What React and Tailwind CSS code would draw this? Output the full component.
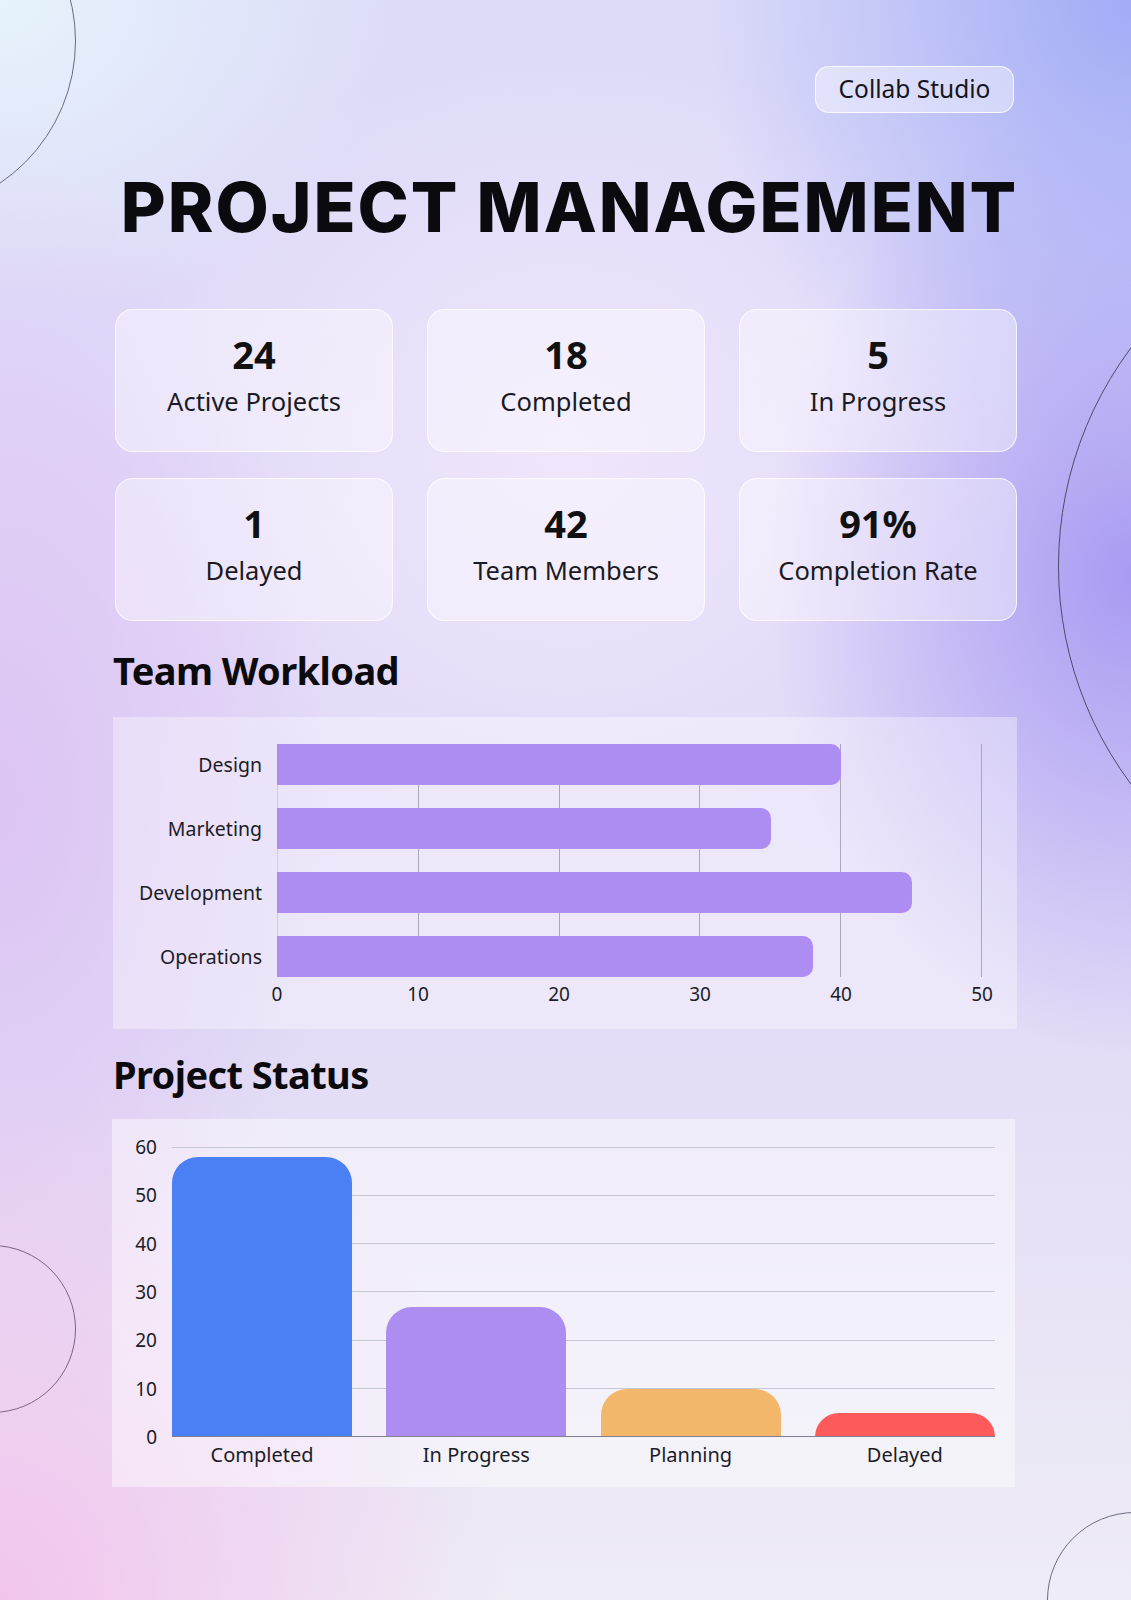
import React from 'react';

const stats = [
  { value: '24', label: 'Active Projects' },
  { value: '18', label: 'Completed' },
  { value: '5', label: 'In Progress' },
  { value: '1', label: 'Delayed' },
  { value: '42', label: 'Team Members' },
  { value: '91%', label: 'Completion Rate' },
];

const workload = [
  { team: 'Design', value: 40 },
  { team: 'Marketing', value: 35 },
  { team: 'Development', value: 45 },
  { team: 'Operations', value: 38 },
];

const status = [
  { name: 'Completed', value: 58, color: 'bg-[#4b7ff4]' },
  { name: 'In Progress', value: 27, color: 'bg-[#ae8df3]' },
  { name: 'Planning', value: 10, color: 'bg-[#f2b76a]' },
  { name: 'Delayed', value: 5, color: 'bg-[#fd5b5b]' },
];

const StatCard = ({ value, label }) => (
  <div className="h-[143px] flex flex-col items-center pt-[25px] rounded-[18px] border-[1.5px] border-white/75 bg-white/40">
    <div className="text-[38px] leading-[38px] font-bold text-[#111]">{value}</div>
    <div className="mt-[12px] text-[25.5px] leading-[32px] text-[#1a1a22]">{label}</div>
  </div>
);

const WorkloadChart = () => (
  <div className="w-[904px] h-[312px] bg-white/35 pt-[27px] flex">
    <div className="w-[149px] flex flex-col gap-[23px]">
      {workload.map((row) => (
        <div key={row.team} className="h-[41px] flex items-center justify-end text-[19.5px] text-[#1c1c26]">
          {row.team}
        </div>
      ))}
    </div>
    <div className="ml-[15px] w-[705px]">
      <div className="relative">
        <div className="absolute inset-0 flex justify-between">
          {[0, 1, 2, 3, 4, 5].map((i) => (
            <div key={i} className={`w-px h-full ${i === 0 ? 'bg-[#cfcfe0]' : 'bg-[#a9a9bb]'}`} />
          ))}
        </div>
        <div className="relative flex flex-col gap-[23px]">
          {workload.map((row) => (
            <div
              key={row.team}
              className="h-[41px] bg-[#ae8df3] rounded-r-[10px]"
              style={{ width: `${(row.value / 50) * 100}%` }}
            />
          ))}
        </div>
      </div>
      <div className="mt-[5px] -mx-[20px] flex justify-between">
        {[0, 10, 20, 30, 40, 50].map((t) => (
          <div key={t} className="w-[40px] text-center text-[19px] leading-[24px] text-[#1c1c26]">
            {t}
          </div>
        ))}
      </div>
    </div>
  </div>
);

const StatusChart = () => (
  <div className="-ml-[1px] w-[903px] h-[368px] bg-white/45 pt-[16px] flex">
    <div className="w-[45px] h-[314px] flex flex-col justify-between items-end text-[19px] leading-[24px] text-[#1c1c26]">
      {[60, 50, 40, 30, 20, 10, 0].map((t) => (
        <div key={t}>{t}</div>
      ))}
    </div>
    <div className="ml-[15px] mt-[12px] w-[823px]">
      <div className="relative h-[290px]">
        <div className="absolute inset-0 flex flex-col justify-between">
          {[60, 50, 40, 30, 20, 10].map((t) => (
            <div key={t} className="h-px w-full bg-[#c6c7d4]" />
          ))}
          <div className="h-px w-full" />
        </div>
        <div className="relative h-full flex items-end gap-[34.3px]">
          {status.map((bar) => (
            <div
              key={bar.name}
              className={`w-[180px] rounded-t-[26px] ${bar.color}`}
              style={{ height: `${(bar.value / 60) * 100}%` }}
            />
          ))}
        </div>
        <div className="absolute left-0 right-0 bottom-0 h-px bg-[#80808e]" />
      </div>
      <div className="mt-[6px] flex gap-[34.3px]">
        {status.map((bar) => (
          <div key={bar.name} className="w-[180px] text-center text-[20px] leading-[24px] text-[#1c1c26]">
            {bar.name}
          </div>
        ))}
      </div>
    </div>
  </div>
);

export default function App() {
  return (
    <div className="relative w-[1131px] h-[1600px] overflow-hidden font-['Noto_Sans',sans-serif] text-[#111] bg-[radial-gradient(ellipse_38%_30%_at_100%_0%,#a2abf6_0%,rgba(162,171,246,0)_100%),radial-gradient(ellipse_32%_30%_at_100%_36%,#a89bf2_0%,rgba(168,155,242,0)_100%),radial-gradient(ellipse_45%_35%_at_0%_100%,#f1c4ee_0%,rgba(241,196,238,0)_100%),radial-gradient(ellipse_30%_40%_at_0%_50%,#dcc4f3_0%,rgba(220,196,243,0)_100%),radial-gradient(ellipse_35%_20%_at_0%_0%,#e6f3fb_0%,rgba(230,243,251,0)_100%),radial-gradient(ellipse_40%_25%_at_50%_28%,#efe6fb_0%,rgba(239,230,251,0)_100%),linear-gradient(180deg,#dcdcf8_0%,#e2d8f8_35%,#e2dcf6_65%,#eeecf5_100%)]">
      <div className="absolute left-[-268px] top-[-131px] w-[344px] h-[344px] rounded-full border-[1.5px] border-[#6a6a7e]" />
      <div className="absolute left-[1058px] top-[201px] w-[730px] h-[730px] rounded-full border-[1.5px] border-[#4a4c68]" />
      <div className="absolute left-[-92px] top-[1245px] w-[168px] h-[168px] rounded-full border-[1.5px] border-[#7a6484]" />
      <div className="absolute left-[1047px] top-[1512px] w-[176px] h-[176px] rounded-full border-[1.5px] border-[#6e6e80]" />

      <div className="relative">
        <div className="pt-[66px] pr-[117px] flex justify-end">
          <div className="w-[199px] h-[47px] flex items-center justify-center rounded-[14px] border-[1.5px] border-white/80 bg-white/40 text-[24.5px] text-[#15151c]">
            Collab Studio
          </div>
        </div>

        <h1 className="mt-[60px] pl-[8px] text-center whitespace-nowrap font-['Inter',sans-serif] font-extrabold text-[69px] leading-[69px] tracking-[2px] text-[#0b0b0f]">
          PROJECT MANAGEMENT
        </h1>

        <div className="ml-[113px] w-[904px]">
          <div className="mt-[67px] ml-[2px] w-[902px] grid grid-cols-[278px_278px_278px] gap-x-[34px] gap-y-[26px]">
            {stats.map((s) => (
              <StatCard key={s.label} value={s.value} label={s.label} />
            ))}
          </div>

          <h2 className="mt-[29px] text-[38px] leading-[40px] tracking-[-0.6px] font-bold text-[#0b0b0f]">Team Workload</h2>
          <div className="mt-[27px]">
            <WorkloadChart />
          </div>

          <h2 className="mt-[25px] text-[38px] leading-[40px] tracking-[-0.6px] font-bold text-[#0b0b0f]">Project Status</h2>
          <div className="mt-[25px]">
            <StatusChart />
          </div>
        </div>
      </div>
    </div>
  );
}
